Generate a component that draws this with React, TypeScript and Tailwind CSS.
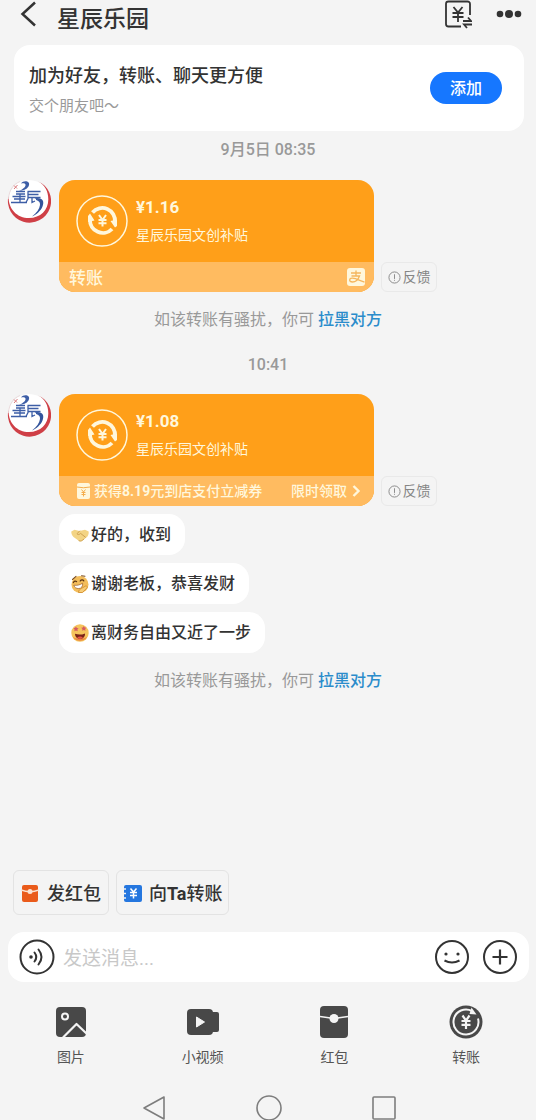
import { ReactNode } from 'react';

const bubbles = [
    { icon: <HandshakeEmoji />, text: '好的，收到' },
    { icon: <GrinEmoji />, text: '谢谢老板，恭喜发财' },
    { icon: <StarEyesEmoji />, text: '离财务自由又近了一步' },
];

const tools = [
    { label: '图片', icon: <PhotoIcon /> },
    { label: '小视频', icon: <VideoIcon /> },
    { label: '红包', icon: <PacketIcon className="w-8 h-9 text-[#484848]" /> },
    { label: '转账', icon: <TransferIcon /> },
];

function HandshakeEmoji() {
    return (
        <svg viewBox="0 0 18 18" className="size-[18px]" aria-hidden="true">
            <path d="M.3 5.500 3.500 3.800l5 1.200 5.500-1.200 3.700 1.700c.2 2.500-.5 4.500-2 5.800L11 14.800c-1 .7-2.200.7-3.200 0L2.500 11C1 9.500.2 7.800.3 5.500Z" fill="#f3d484" />
            <path d="M8.600 5 6 7.800c.8 1.200 2.400.9 3.600-.4l4.800 3.800M8 14.800c2 .9 3.200-.2 5-1.800" fill="none" stroke="#cfa252" strokeWidth="1" strokeLinecap="round" />
        </svg>
    );
}

function GrinEmoji() {
    return (
        <svg viewBox="0 0 18 20" className="w-[18px] h-5" aria-hidden="true">
            <circle cx="9" cy="10.500" r="8.500" fill="#f3bd5b" />
            <path d="M1.500 5.500 5 2.400M10.500 1.800l3.500.4" stroke="#7a4a1a" strokeWidth="1.100" strokeLinecap="round" />
            <path d="M2.400 8.600c.8-1.600 2.200-1.900 3.200-.9M9.200 7c1-1.500 2.800-1.500 3.600-.1" fill="none" stroke="#5c3413" strokeWidth="1.200" strokeLinecap="round" />
            <path d="M2.800 11.200c3.200.5 6.200-.3 8.800-2 .4 3-1 5.200-3.800 5.400-2.600 0-4.400-1.200-5-3.400Z" fill="#fff" stroke="#9a5a24" strokeWidth=".7" />
            <path d="M7.500 18.500c0-2.400 1.500-3.300 3.200-4.200l4.300-2.500c1.400.3 1.600 1.400.8 2.200l-4.300 4.500Z" fill="#f7cd78" stroke="#cf8a2c" strokeWidth=".8" />
        </svg>
    );
}

function StarEyesEmoji() {
    return (
        <svg viewBox="0 0 18 18" className="size-[18px]" aria-hidden="true">
            <circle cx="9" cy="9" r="8.700" fill="#f5c45c" />
            <path d="M1.500 12.500a8.700 8.700 0 0 0 15 0c-3 3-12 3-15 0Z" fill="#e9873f" />
            <path d="m5 2.400.9 1.500 1.700.3-1.200 1.300.3 1.700L5 6.500l-1.600.7.2-1.800-1.200-1.200L4.100 3.800ZM12.800 2l.9 1.500 1.700.3-1.200 1.300.3 1.700-1.700-.7-1.600.7.2-1.800-1.200-1.200 1.700-.4Z" fill="#d65a62" />
            <path d="M4 9.800c3.400 1.200 6.800 1 10-.4.2 3.200-1.700 5.300-4.700 5.400S4 13 4 9.800Z" fill="#7b2418" />
            <path d="M6.200 13.400c1.600-1.200 4-1.200 5.600-.2-1.400 2-4.200 2-5.600.2Z" fill="#ea5548" />
        </svg>
    );
}

function PhotoIcon() {
    return (
        <svg viewBox="0 0 32 32" className="size-8" aria-hidden="true">
            <rect x="1" y="1" width="30" height="30" rx="4" fill="#484848" />
            <circle cx="10" cy="10.500" r="3" fill="none" stroke="#f4f4f4" strokeWidth="2" />
            <path d="M8 31.500 21.500 18 32 28" fill="none" stroke="#f4f4f4" strokeWidth="2.200" strokeLinejoin="round" />
        </svg>
    );
}

function VideoIcon() {
    return (
        <svg viewBox="0 0 34 32" className="w-[34px] h-8" aria-hidden="true">
            <rect x="1" y="3" width="26" height="26" rx="4" fill="#484848" />
            <rect x="22" y="6" width="11" height="20" rx="2" fill="#484848" />
            <path d="M10.500 11v10l8-5Z" fill="#f4f4f4" stroke="#f4f4f4" strokeLinejoin="round" />
        </svg>
    );
}

function PacketIcon({ className }: { className: string }) {
    return (
        <svg viewBox="0 0 32 36" className={className} aria-hidden="true">
            <rect x="2" y="2" width="28" height="32" rx="4" fill="currentColor" />
            <path d="M2 12.500 16 14.500 30 12.500" fill="none" stroke="#f4f4f4" strokeWidth="1.600" />
            <circle cx="16" cy="14.500" r="4.500" fill="#f4f4f4" />
        </svg>
    );
}

function TransferIcon() {
    return (
        <svg viewBox="0 0 34 34" className="size-[34px]" aria-hidden="true">
            <circle cx="17" cy="17" r="16.500" fill="#484848" />
            <path d="M29 13.500A12.500 12.500 0 1 1 23 6" fill="none" stroke="#f4f4f4" strokeWidth="2" />
            <path d="m22.500 2.500 5 7-7-.5Z" fill="#f4f4f4" />
            <path d="m13.500 10.500 3.500 5 3.500-5M17 15.500V24M12.500 16h9M12.500 19.800h9" fill="none" stroke="#f4f4f4" strokeWidth="2.200" />
        </svg>
    );
}

function StarLogo() {
    return (
        <svg viewBox="0 0 44 46" className="w-11 h-[46px] shrink-0" aria-hidden="true">
            <circle cx="22" cy="23" r="21" fill="#fff" />
            <path d="M31 3.200A21.600 21.600 0 1 1 1.500 18c-.2 13 8.500 22 20.500 22 11.500 0 19.300-8 19.300-18.500C41.300 13 38 7 31 3.200Z" fill="#cf3f46" />
            <path d="M1.500 21C2 12 6.500 6 13 3.500" fill="none" stroke="#e6d3d5" strokeWidth=".8" />
            <path d="M14 5.500C16.500 1.500 24.500 3 21.500 8.500c-1.800 3-5.500 4-9.500 4.500 4.500-2 7-4.500 6.500-6.500-.5-1.500-2.500-1.500-4.500-1Z" fill="#3d5ea6" />
            <path d="M29 20c7-.5 8.500 3.500 6.500 8.500-1.800 4.500-6 8-10.500 10 4.500-3.500 7.500-7.500 8-11.500.3-3-1.500-4.500-4-5Z" fill="#33549c" />
            <path d="M9 13.500h9M9 16h9M5.500 18.500h13M7 21h11M4 24.500h16M13 16v8.500" fill="none" stroke="#3d5ea6" strokeWidth="1.300" />
            <path d="M20.500 13.500h13M20.500 16.500h11M20.500 19.500h13M21 13.500v7l-2 4M25 19.500v5l3-1.500M28 19.500l5 4" fill="none" stroke="#3d5ea6" strokeWidth="1.300" />
            <path d="m7 7.500 3 3M10.500 7l-3.500 4" stroke="#d9777a" strokeWidth="1" />
        </svg>
    );
}

function PayRing() {
    return (
        <svg viewBox="0 0 52 52" className="size-[52px] shrink-0" fill="none" stroke="#fff7dc" aria-hidden="true">
            <circle cx="26" cy="26" r="25" strokeWidth="1.500" />
            <path d="M16.500 17.500A12.800 12.800 0 0 1 39 27M36 34A12.800 12.800 0 0 1 14 24.500" strokeWidth="3.800" />
            <path d="m34.500 26 6.500-1.500V31l-2 1.500ZM18.500 25.500l-6.500 1.500v-6l2-2.500Z" fill="#fff7dc" stroke="none" />
            <path d="m23 20 3.500 5 3.500-5M26.500 25v6.500M22.500 25h8M22.500 28.200h8" strokeWidth="2" />
        </svg>
    );
}

function Avatar() {
    return (
        <div className="w-[51px] shrink-0 pl-[7px] -mt-0.5">
            <StarLogo />
        </div>
    );
}

function TransferCard({ amount, footer }: { amount: string; footer: ReactNode }) {
    return (
        <div className="flex items-start gap-2">
            <Avatar />
            <div className="-mr-px w-[315px] overflow-hidden rounded-2xl bg-[#ff9f19] text-[#fff7dc]">
                <div className="flex h-[82px] items-center gap-2 pl-[17px]">
                    <PayRing />
                    <div>
                        <p className="text-[17px] leading-6 font-bold">{amount}</p>
                        <p className="mt-1 text-sm leading-6">星辰乐园文创补贴</p>
                    </div>
                </div>
                <div className="flex h-[30px] items-center justify-between bg-[#ffbb60] pl-2.5 pr-[9px]">{footer}</div>
            </div>
            <button className="flex h-[30px] w-14 items-center justify-center gap-0.5 self-end rounded-md border border-[#e9e9e9] text-sm text-[#858585]">
                <svg viewBox="0 0 14 14" className="size-[13px] shrink-0" fill="none" stroke="currentColor" aria-hidden="true">
                    <circle cx="7" cy="7" r="6" />
                    <path d="M7 3.500v5M7 9.500v1" />
                </svg>
                反馈
            </button>
        </div>
    );
}

function BlockHint() {
    return (
        <p className="text-center text-base leading-6 text-[#999]">
            如该转账有骚扰，你可 <a href="#block" className="font-medium text-[#2b8ccb]">拉黑对方</a>
        </p>
    );
}

export default function App() {
    return (
        <div className="flex min-h-screen flex-col overflow-hidden bg-[#f4f4f4] font-[Roboto,'Noto_Sans_CJK_SC',sans-serif] text-[#333]">
            {/* Header */}
            <header className="flex h-[45px] items-start justify-between pl-5 pr-3.5">
                <div className="flex items-start gap-5">
                    <button aria-label="返回" className="h-7">
                        <svg viewBox="0 0 17 28" className="h-7 w-[17px]" fill="none" stroke="currentColor" strokeWidth="2.500" aria-hidden="true">
                            <path d="M15 2.500 2.500 14 15 25.500" />
                        </svg>
                    </button>
                    <h1 className="text-[23px] leading-10 font-medium">星辰乐园</h1>
                </div>
                <div className="flex items-start gap-6">
                    <button aria-label="收付记录">
                        <svg viewBox="0 0 28 30" className="h-[30px] w-7" fill="none" stroke="currentColor" strokeWidth="1.800" aria-hidden="true">
                            <path d="M26 15V4a2.500 2.500 0 0 0-2.500-2.500h-19A2.500 2.500 0 0 0 2 4v20a2.500 2.500 0 0 0 2.500 2.500H17" />
                            <path d="m9.500 7 4.500 5.500L18.500 7M14 12.500V22M8.500 13h11M8.500 17h11" />
                            <path d="M19 21h8l-3-3.500M28 24.500h-8l3 3.500" strokeWidth="1.800" />
                        </svg>
                    </button>
                    <button aria-label="更多" className="h-7">
                        <svg viewBox="0 0 26 28" className="h-7 w-[26px]" fill="currentColor" aria-hidden="true">
                            <circle cx="4" cy="14" r="3.300" />
                            <circle cx="13" cy="14" r="4" />
                            <circle cx="22" cy="14" r="3.300" />
                        </svg>
                    </button>
                </div>
            </header>

            {/* Add friend banner */}
            <section className="ml-3.5 mr-3 flex h-[86px] items-center justify-between rounded-2xl bg-white pl-[15px] pr-[22px]">
                <div className="pt-1">
                    <h2 className="text-lg leading-7 font-medium">加为好友，转账、聊天更方便</h2>
                    <p className="mt-1 text-[15px] leading-6 text-[#999]">交个朋友吧～</p>
                </div>
                <button className="h-8 w-[72px] rounded-full bg-[#1677ff] pt-0.5 text-base font-medium text-white">添加</button>
            </section>

            {/* Messages */}
            <main className="flex-1">
                <p className="mt-1.5 pt-px text-center text-base leading-6 font-medium text-[#999]">9月5日 08:35</p>
                <div className="mt-[18px]">
                    <TransferCard
                        amount="¥1.16"
                        footer={
                            <>
                                <span className="pt-1 text-[17px] font-medium">转账</span>
                                <svg viewBox="0 0 18 18" className="size-[18px]" aria-hidden="true">
                                    <rect width="18" height="18" rx="3" fill="#fff7dc" />
                                    <path d="M4 5h10M9 2.500V8M4.500 8h8c-1.500 4-4 6-7 6-4 0-3.500-4 0-3.800 3.500.2 7 2.300 12 4" fill="none" stroke="#f5b65d" strokeWidth="1.300" />
                                </svg>
                            </>
                        }
                    />
                </div>
                <div className="mt-4">
                    <BlockHint />
                </div>

                <p className="mt-5 pt-px text-center text-base leading-6 font-medium text-[#999]">10:41</p>
                <div className="mt-[17px]">
                    <TransferCard
                        amount="¥1.08"
                        footer={
                            <>
                                <span className="flex items-center gap-0.5 pl-[7px] text-sm font-medium">
                                    <svg viewBox="0 0 16 16" className="size-4" aria-hidden="true">
                                        <rect x="1" y="0" width="13" height="16" rx="2" fill="#fff7dc" />
                                        <path d="M1 4q6.500 1.500 13 0" fill="none" stroke="#f5ad4c" />
                                        <path d="m5.500 6.500 2 2.500 2-2.500M7.500 9v4.500M5.500 9.500h4M5.500 11.500h4" fill="none" stroke="#f5ad4c" />
                                    </svg>
                                    <span>获得<b>8.19</b>元到店支付立减券</span>
                                </span>
                                <a href="#coupon" className="flex items-center gap-1 pr-1 text-sm font-medium">
                                    限时领取
                                    <svg viewBox="0 0 10 14" className="h-3.5 w-2.5" fill="none" stroke="currentColor" strokeWidth="2.400" aria-hidden="true">
                                        <path d="m2.500 2 5 5-5 5" />
                                    </svg>
                                </a>
                            </>
                        }
                    />
                </div>

                <div className="mt-2 ml-[59px] flex flex-col items-start gap-2">
                    {bubbles.map((bubble) => (
                        <button key={bubble.text} className="flex h-[41px] items-center gap-0.5 rounded-2xl bg-white pt-px pl-3 pr-3.5 text-base font-medium">
                            {bubble.icon}
                            {bubble.text}
                        </button>
                    ))}
                </div>
                <div className="mt-4">
                    <BlockHint />
                </div>
            </main>

            {/* Quick actions */}
            <div className="flex gap-[7px] px-[13px]">
                <button className="flex h-[45px] items-center gap-2 rounded-md border border-[#e3e3e3] px-[7px] pt-0.5 text-lg font-medium">
                    <svg viewBox="0 0 18 20" className="h-5 w-[18px]" aria-hidden="true">
                        <rect x="1" y="1" width="16" height="17" rx="2" fill="#ea5b1b" />
                        <path d="M0 6q9 3.500 18 0" fill="none" stroke="#fbe3d3" strokeWidth="1.400" />
                        <circle cx="9" cy="7.500" r="2.500" fill="#fbe3d3" />
                    </svg>
                    发红包
                </button>
                <button className="flex h-[45px] items-center gap-1.5 rounded-md border border-[#e3e3e3] px-1.5 pt-0.5 text-lg font-medium">
                    <svg viewBox="0 0 20 20" className="size-5" aria-hidden="true">
                        <rect x="1" y="1" width="18" height="17" rx="2" fill="#2577df" />
                        <path d="M0 5h3M0 9.500h3M0 14h3" stroke="#f4f4f4" strokeWidth="1.500" />
                        <path d="M7.500 4.500 10.500 8 13.500 4.500M10.500 8V14.500M7 8.500h7M7 11.500h7" fill="none" stroke="#fff" strokeWidth="1.500" />
                    </svg>
                    <span>向<b>Ta</b>转账</span>
                </button>
            </div>

            {/* Input bar */}
            <div className="mt-[17px] ml-2 mr-[7px] flex h-[50px] items-center rounded-2xl bg-white px-[11px]">
                <button aria-label="语音">
                    <svg viewBox="0 0 36 36" className="size-9" fill="none" stroke="currentColor" strokeWidth="2" aria-hidden="true">
                        <circle cx="18" cy="18" r="16.500" />
                        <circle cx="12" cy="18" r="1.800" fill="currentColor" stroke="none" />
                        <path d="M15.500 13.500q3.500 4.500 0 9M19.500 10.500q6 7.500 0 15" strokeLinecap="round" />
                    </svg>
                </button>
                <input
                    type="text"
                    aria-label="发送消息"
                    placeholder="发送消息..."
                    className="mx-2 min-w-0 flex-1 bg-transparent pt-1 text-[19px] outline-none placeholder:text-[#c8c8c8]"
                />
                <button aria-label="表情">
                    <svg viewBox="0 0 36 36" className="size-9" fill="none" stroke="currentColor" strokeWidth="2" aria-hidden="true">
                        <circle cx="18" cy="18" r="16" />
                        <circle cx="12" cy="15" r="1.600" fill="currentColor" stroke="none" />
                        <circle cx="24" cy="15" r="1.600" fill="currentColor" stroke="none" />
                        <path d="M10.500 21.500q7.500 4 15 0" />
                    </svg>
                </button>
                <button aria-label="更多功能" className="ml-3">
                    <svg viewBox="0 0 36 36" className="size-9" fill="none" stroke="currentColor" strokeWidth="2" aria-hidden="true">
                        <circle cx="18" cy="18" r="16" />
                        <path d="M10.500 18h15M18 10.500v15" strokeWidth="2.200" />
                    </svg>
                </button>
            </div>

            {/* Tool grid */}
            <div className="mt-[21px] grid grid-cols-4 pl-[5px] pr-1">
                {tools.map((tool) => (
                    <button key={tool.label} className="flex flex-col items-center text-sm leading-6 text-[#555]">
                        <span className="flex h-[38px] items-center">{tool.icon}</span>
                        <span className="mt-1">{tool.label}</span>
                    </button>
                ))}
            </div>

            {/* System navigation */}
            <nav className="mt-[26px] flex h-[25px] items-start justify-center gap-[90px] pl-px text-[#7d7d7d]">
                <button aria-label="系统返回">
                    <svg viewBox="0 0 24 26" className="h-[26px] w-6" fill="none" stroke="currentColor" strokeWidth="1.600" strokeLinejoin="round" aria-hidden="true">
                        <path d="M22 2v22L2 13Z" />
                    </svg>
                </button>
                <button aria-label="主屏幕">
                    <svg viewBox="0 0 26 26" className="size-[26px]" fill="none" stroke="currentColor" strokeWidth="1.600" aria-hidden="true">
                        <circle cx="13" cy="13" r="12" />
                    </svg>
                </button>
                <button aria-label="最近任务">
                    <svg viewBox="0 0 24 26" className="h-[26px] w-6" fill="none" stroke="currentColor" strokeWidth="1.600" aria-hidden="true">
                        <rect x="1" y="2" width="22" height="22" rx="1" />
                    </svg>
                </button>
            </nav>
        </div>
    );
}
